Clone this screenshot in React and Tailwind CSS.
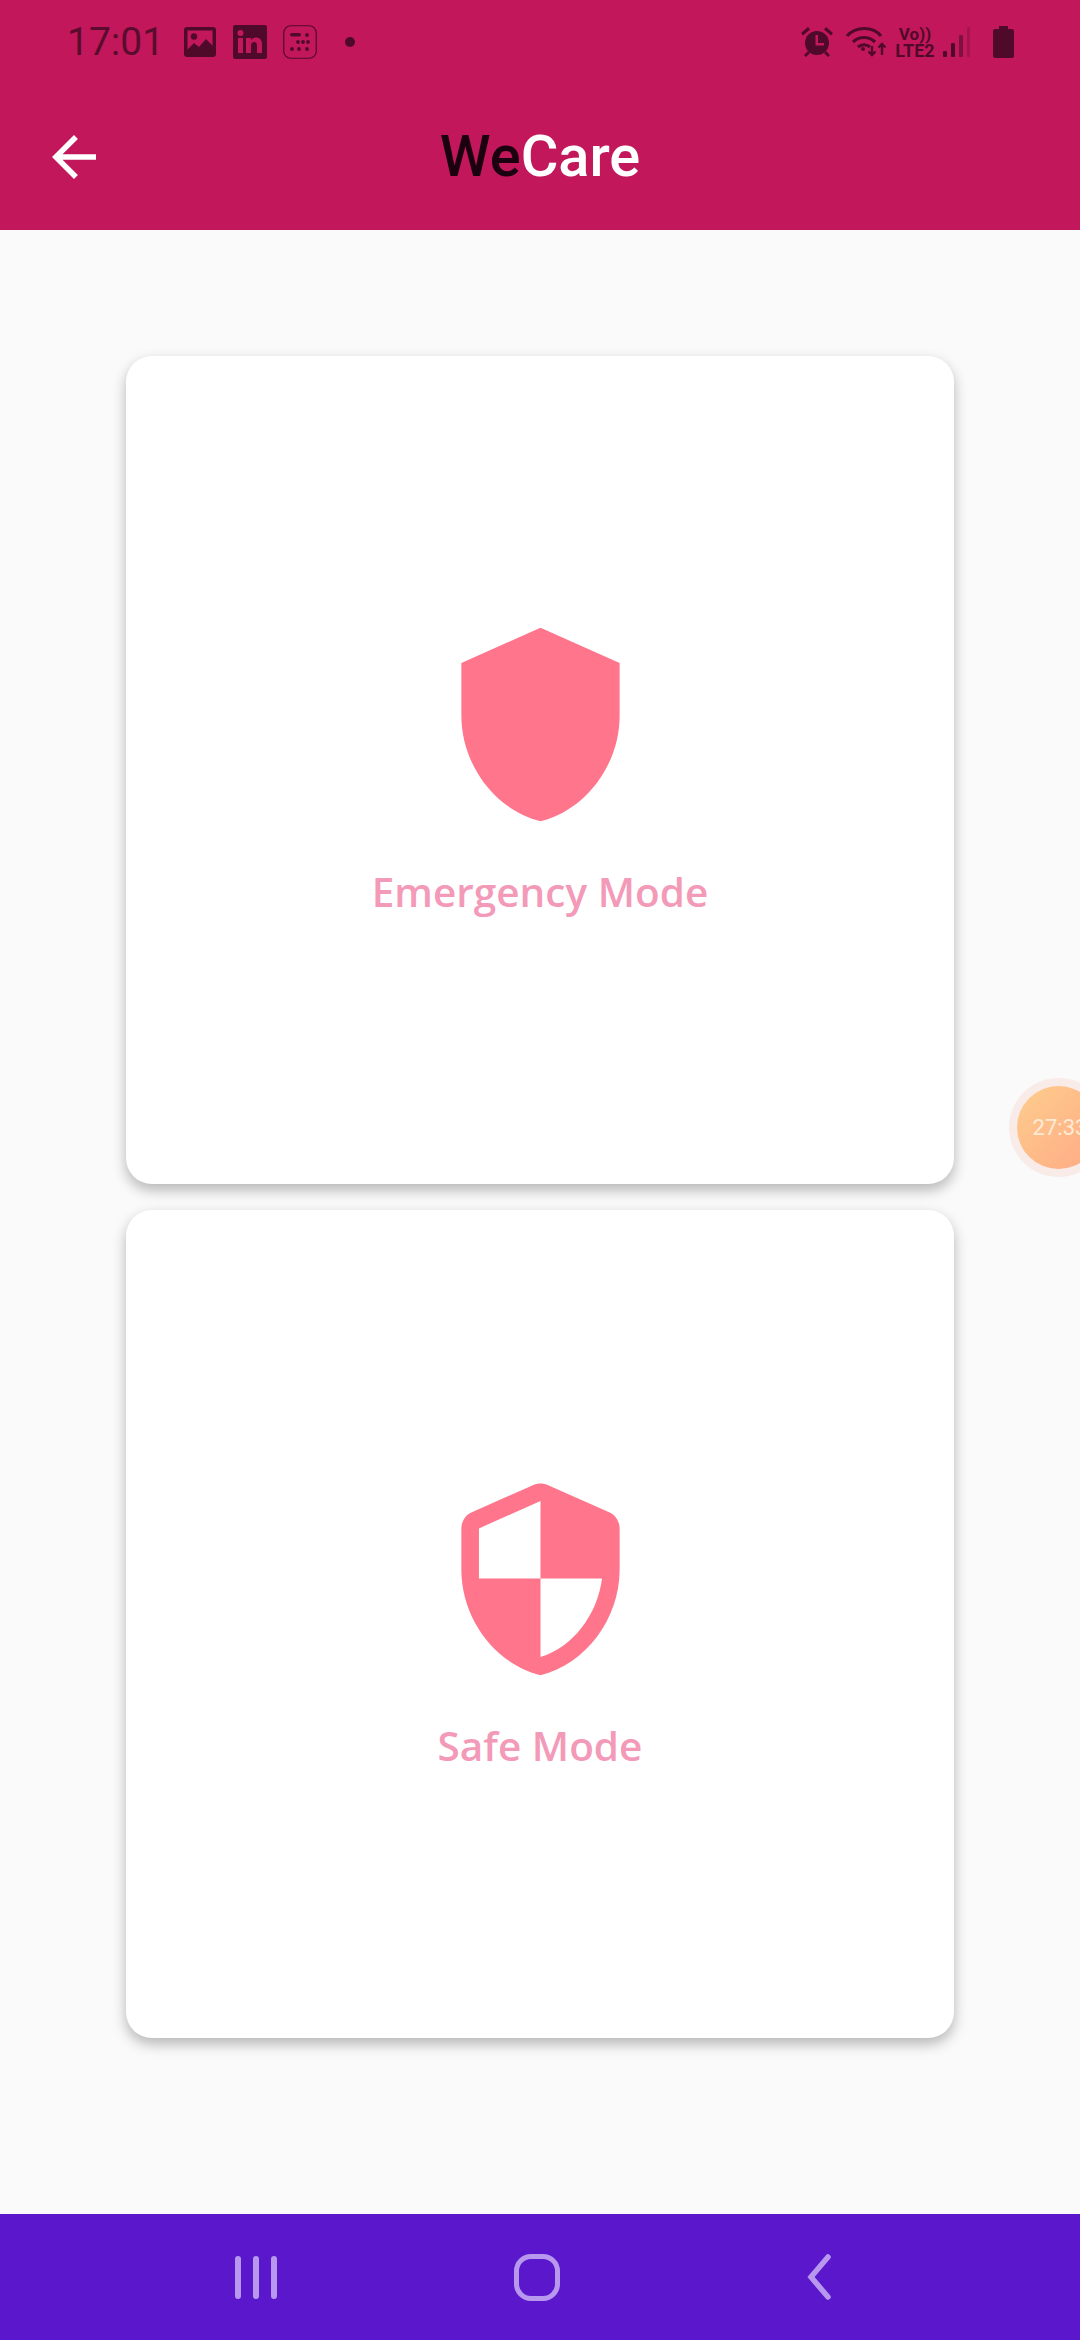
import React from 'react';

const StatusDark = '#500a29';

const ShieldIcon = () => (
  <svg viewBox="0 0 24 24" className="w-[211px] h-[211px]" fill="#fe758c">
    <path d="M12 1L3 5v6c0 5.55 3.84 10.74 9 12 5.16-1.26 9-6.45 9-12V5l-9-4z" />
  </svg>
);

const SecurityIcon = () => (
  <svg viewBox="0 0 24 24" className="w-[211px] h-[211px]" fill="#fe758c">
    <path d="M11.19 1.36l-7 3.11C3.47 4.79 3 5.51 3 6.3V11c0 5.55 3.84 10.74 9 12 5.16-1.26 9-6.45 9-12V6.3c0-.79-.47-1.51-1.19-1.83l-7-3.11c-.51-.23-1.11-.23-1.62 0zM12 11.99h7c-.53 4.12-3.28 7.79-7 8.94V12H5V6.3l7-3.11v8.8z" />
  </svg>
);

const ModeCard = ({ icon, label }) => (
  <div className="w-[828px] h-[828px] bg-white rounded-[26px] shadow-[0_6px_14px_rgba(0,0,0,0.28)] flex flex-col items-center justify-center">
    {icon}
    <div className="mt-[36px] mb-[3px] text-[40.5px] leading-[52px] font-semibold text-[#f49ab9] font-['Open_Sans',sans-serif]">{label}</div>
  </div>
);

const StatusLeft = () => (
  <div className="flex items-center">
    <span className="text-[39px] leading-[44px] text-[#5a0c2e] font-['Roboto',sans-serif]">17:01</span>
    <svg viewBox="0 0 32 30" className="w-[32px] h-[30px] ml-[20px]">
      <rect width="32" height="30" rx="3" fill={StatusDark} />
      <rect x="3.5" y="3.5" width="25" height="19" fill="#c2185b" />
      <circle cx="10" cy="9.5" r="3.2" fill={StatusDark} />
      <path d="M3 23l7-7 5 4 7-8 7 7v8H3z" fill={StatusDark} />
    </svg>
    <svg viewBox="0 0 34 34" className="w-[34px] h-[34px] ml-[17px]">
      <rect width="34" height="34" rx="2" fill={StatusDark} />
      <rect x="5" y="13" width="5" height="15" fill="#c2185b" />
      <circle cx="7.5" cy="8" r="3" fill="#c2185b" />
      <path d="M13 13h5v2.2c1-1.6 2.7-2.6 4.8-2.6 4 0 6.2 2.4 6.2 6.8V28h-5v-7.6c0-2.2-.8-3.5-2.7-3.5S18 18.3 18 20.4V28h-5z" fill="#c2185b" />
    </svg>
    <svg viewBox="0 0 34 34" className="w-[34px] h-[34px] ml-[16px]" fill={StatusDark}>
      <rect x="0.75" y="0.75" width="32.5" height="32.5" rx="7" fill="none" stroke={StatusDark} strokeWidth="1.2" />
      <rect x="7" y="8" width="11" height="3.5" rx="1.7" />
      <circle cx="24" cy="10" r="1.9" />
      <circle cx="15" cy="17" r="1.9" />
      <circle cx="20" cy="17" r="1.9" />
      <circle cx="25" cy="17" r="1.9" />
      <circle cx="9" cy="24" r="1.9" />
      <circle cx="16" cy="24" r="1.9" />
      <circle cx="24" cy="24" r="1.9" />
    </svg>
    <span className="w-[10px] h-[10px] rounded-full bg-[#500a29] ml-[28px]"></span>
  </div>
);

const StatusRight = () => (
  <div className="flex items-center">
    <svg viewBox="0 0 34 32" className="w-[34px] h-[32px]" fill={StatusDark}>
      <circle cx="17" cy="17" r="12" />
      <path d="M1 7l7-6 2 2.5-7 6zM33 7l-7-6-2 2.5 7 6z" />
      <path d="M8 25l-4 4 2 2 4-4zM26 25l4 4-2 2-4-4z" />
      <path d="M15.5 9h2.5v8h6v2.5h-8.5z" fill="#c2185b" />
    </svg>
    <svg viewBox="0 0 42 32" className="w-[42px] h-[32px] ml-[11px]" fill="none" stroke={StatusDark} strokeWidth="3.2">
      <path d="M2 10c9-10 26-10 34 0" />
      <path d="M8 16c6-6 16-6 22 0" />
      <path d="M13 21c3.5-3 8.5-3 12 0" />
      <circle cx="18" cy="23" r="2" fill={StatusDark} stroke="none" />
      <path d="M27 20v9M23.5 25.5l3.5 3.5 3.5-3.5" strokeWidth="2.4" />
      <path d="M37 29v-11M33.5 21.5l3.5-3.5 3.5 3.5" strokeWidth="2.4" />
    </svg>
    <div className="w-[42px] ml-[7px] flex flex-col items-center font-['Roboto',sans-serif] font-bold text-[#500a29]">
      <span className="text-[17px] leading-[17px]">Vo))</span>
      <span className="text-[18px] leading-[15px]">LTE2</span>
    </div>
    <svg viewBox="0 0 28 30" className="w-[28px] h-[30px] ml-[7px]">
      <rect x="0" y="24" width="4" height="6" rx="1" fill={StatusDark} />
      <rect x="8" y="16" width="4" height="14" rx="1" fill={StatusDark} />
      <rect x="16" y="8" width="4" height="22" rx="1" fill="#7d1142" />
      <rect x="24" y="0" width="3" height="30" rx="1" fill="#a5144f" />
    </svg>
    <svg viewBox="0 0 21 32" className="w-[21px] h-[32px] ml-[22px]" fill={StatusDark}>
      <path d="M6 0h9v3h4a2 2 0 0 1 2 2v25a2 2 0 0 1-2 2H2a2 2 0 0 1-2-2V5a2 2 0 0 1 2-2h4z" />
    </svg>
  </div>
);

export default function App() {
  return (
    <div className="relative w-[1080px] h-[2340px] overflow-hidden flex flex-col bg-[#fafafa]">
      <header className="bg-[#c2185b] h-[230px] shrink-0">
        <div className="h-[84px] pl-[67px] pr-[66px] flex items-center justify-between">
          <StatusLeft />
          <StatusRight />
        </div>
        <div className="relative h-[146px] flex items-center justify-center">
          <svg viewBox="0 0 24 24" className="absolute left-[41px] w-[66px] h-[66px]" fill="white">
            <path d="M20 11H7.83l5.59-5.59L12 4l-8 8 8 8 1.41-1.41L7.83 13H20v-2z" />
          </svg>
          <h1 className="text-[57.75px] leading-none font-medium text-white font-['Roboto',sans-serif]">
            <span className="text-[#1b0010]">We</span>Care
          </h1>
        </div>
      </header>

      <main className="flex-1 flex flex-col items-center gap-[26px] pt-[126px]">
        <ModeCard icon={<ShieldIcon />} label="Emergency Mode" />
        <ModeCard icon={<SecurityIcon />} label="Safe Mode" />
      </main>

      <nav className="h-[126px] shrink-0 bg-[#5a17cb] flex items-center pl-[115px]">
        <div className="w-[281px] flex items-center justify-center">
          <div className="flex gap-[12px]">
            <span className="w-[6px] h-[43px] rounded-full bg-[#b897ee]"></span>
            <span className="w-[6px] h-[43px] rounded-full bg-[#b897ee]"></span>
            <span className="w-[6px] h-[43px] rounded-full bg-[#b897ee]"></span>
          </div>
        </div>
        <div className="w-[281px] flex items-center justify-center">
          <span className="w-[46px] h-[47px] rounded-[17px] border-[5px] border-[#b897ee]"></span>
        </div>
        <div className="w-[281px] flex items-center justify-center">
          <svg viewBox="0 0 28 46" className="w-[28px] h-[46px]" fill="none" stroke="#b897ee" strokeWidth="5.5" strokeLinecap="round" strokeLinejoin="miter">
            <path d="M24 3L7 23l17 20" />
          </svg>
        </div>
      </nav>

      {/* floating timer bubble, runs off the right edge */}
      <div className="absolute left-[1009px] top-[1078px] w-[99px] h-[99px] rounded-full bg-[#f8ebe8] flex items-center justify-center">
        <div className="w-[83px] h-[83px] rounded-full bg-gradient-to-br from-[#fdcd8d] to-[#ffa985] flex items-center justify-center pl-[3px]">
          <span className="text-[22px] whitespace-nowrap text-[#fdebd8] font-['Roboto',sans-serif]">27:33</span>
        </div>
      </div>
    </div>
  );
}
